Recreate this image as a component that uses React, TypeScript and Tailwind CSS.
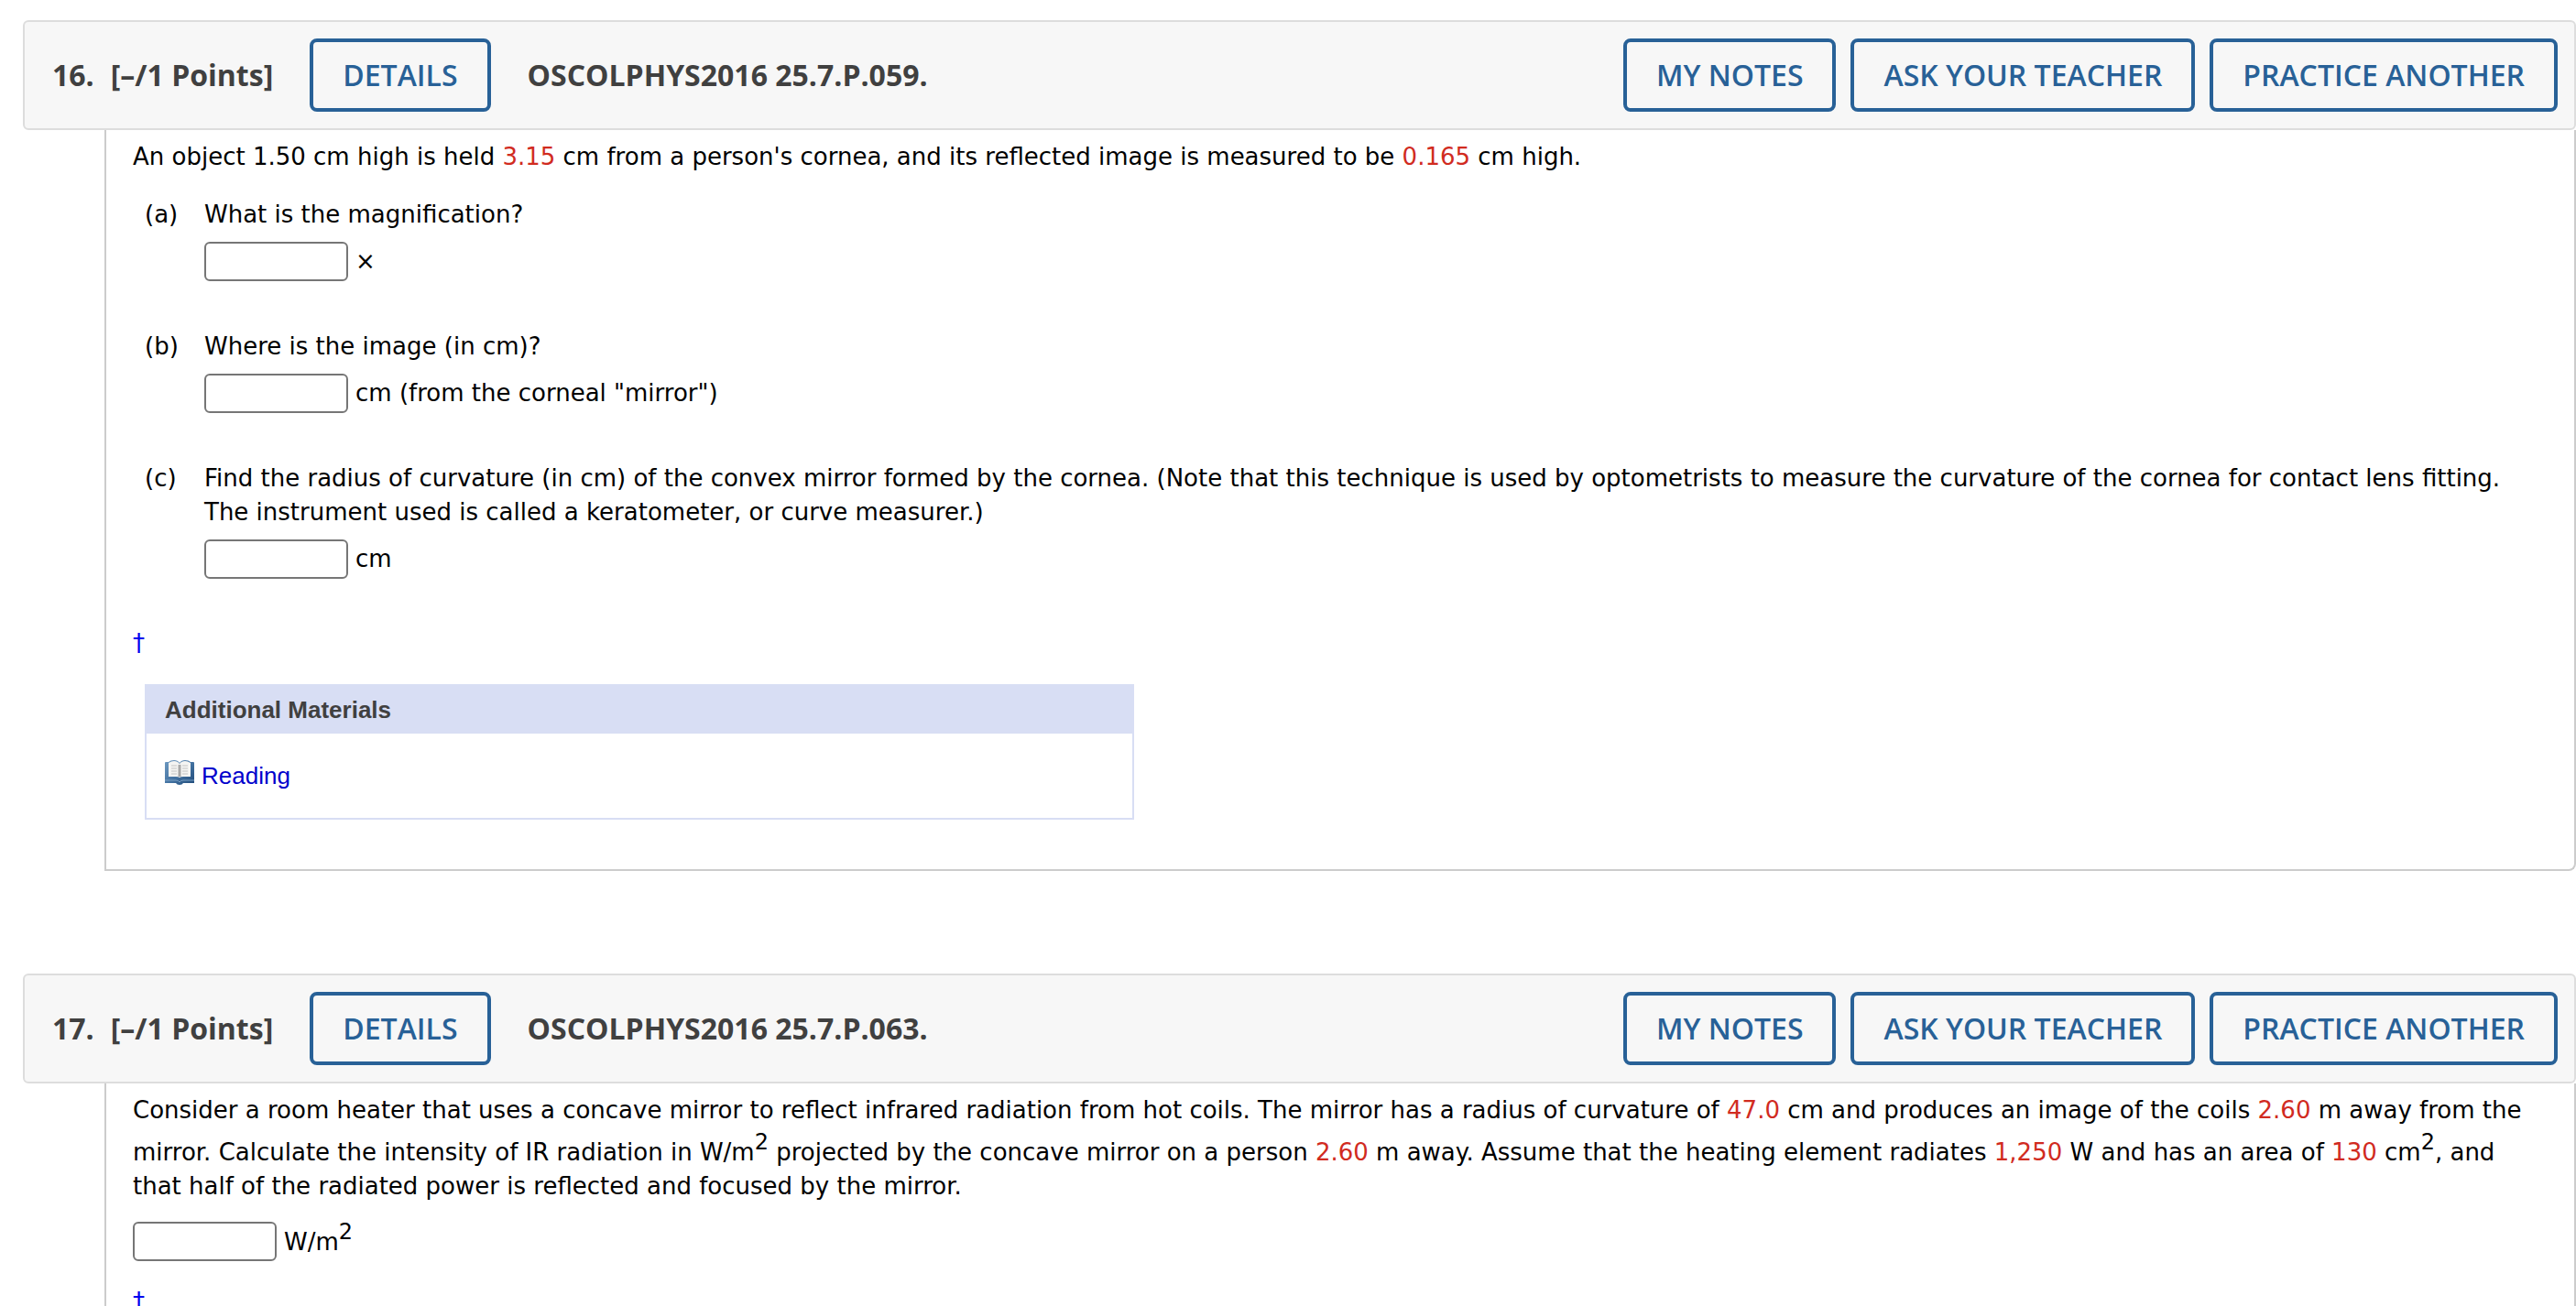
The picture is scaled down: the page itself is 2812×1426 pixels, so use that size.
import type { ReactNode } from "react";
import clsx from "clsx";

interface QuestionProps {
  number: number;
  code: string;
  last?: boolean;
  children: ReactNode;
}

interface AnswerProps {
  id: string;
  label: string;
  children: ReactNode;
}

interface PartProps {
  letter: string;
  question: ReactNode;
  children: ReactNode;
}

const ACTIONS = ["MY NOTES", "ASK YOUR TEACHER", "PRACTICE ANOTHER"];

function HeaderButton({ children }: { children: ReactNode }) {
  return (
    <button
      type="button"
      className="h-20 shrink-0 rounded-lg border-4 border-[#286197] px-8 text-[32px] leading-10 font-semibold whitespace-nowrap text-[#286197]"
    >
      {children}
    </button>
  );
}

// randomized values are shown in red
function Value({ children }: { children: ReactNode }) {
  return <span className="text-[#d12b1f]">{children}</span>;
}

function Sup({ children }: { children: ReactNode }) {
  return <sup className="static align-[12px] text-[24px] leading-8">{children}</sup>;
}

function Answer({ id, label, children }: AnswerProps) {
  return (
    <div className="flex h-[43px] items-center gap-2">
      <input id={id} type="text" aria-label={label} className="h-[43px] w-[157px] rounded-md border-2 border-[#767676] bg-white px-2" />
      <label htmlFor={id} className="[&_sup]:leading-4">
        {children}
      </label>
    </div>
  );
}

function Part({ letter, question, children }: PartProps) {
  return (
    <li className="flex">
      <span className="w-[65px] shrink-0">({letter})</span>
      <div className="flex min-w-0 flex-1 flex-col gap-[11px]">
        <p>{question}</p>
        {children}
      </div>
    </li>
  );
}

function Dagger() {
  return (
    <a href="#footnote" className="text-[#0000ee]">
      †
    </a>
  );
}

function BookIcon() {
  return (
    <svg viewBox="0 0 32 28" className="h-7 w-8" aria-hidden="true">
      <defs>
        <linearGradient id="cover" x1="0" y1="0" x2="1" y2="1">
          <stop offset="0" stopColor="#6f9ac1" />
          <stop offset="0.5" stopColor="#4574a3" />
          <stop offset="1" stopColor="#1f4b79" />
        </linearGradient>
      </defs>
      <path d="M0 4q0-1 1-1h3q2-2 6-2t6 3q2-3 6-3t6 2h3q1 0 1 1v22H20q-1 2-4 2t-4-2H0z" fill="url(#cover)" />
      <path d="M4 4q3-2 6-2 4 0 6 3 2-3 6-3 3 0 6 2v15h-8q-3 0-4 1-1-1-4-1H4z" fill="#f4f4f2" />
      <path d="M16 6v13" stroke="#a8a8a8" strokeWidth="3" />
      <path d="M7 7h6M7 10h6M7 13h6M7 16h6M19 7h6M19 10h6M19 13h6M19 16h6" stroke="#c4c4c4" strokeWidth="1" />
      <path d="M0 23h12q3 0 4 2 1-2 4-2h12" stroke="#7ba0c4" strokeWidth="1" fill="none" />
    </svg>
  );
}

function Question({ number, code, last, children }: QuestionProps) {
  return (
    <section className={clsx("flex flex-col", last && "flex-1")}>
      <header className="flex h-[120px] shrink-0 items-center rounded-md border-2 border-[#dddddd] bg-[#f7f7f7] pr-[18px] pl-[30px] font-['Open_Sans',sans-serif] text-[32px] leading-10 font-bold text-[#404040]">
        <h2 className="flex gap-[18px] whitespace-nowrap">
          <span>{number}.</span>
          <span>[–/1 Points]</span>
        </h2>
        <div className="mr-10 ml-10 flex">
          <HeaderButton>DETAILS</HeaderButton>
        </div>
        <span className="whitespace-nowrap">{code}</span>
        <div className="ml-auto flex gap-4">
          {ACTIONS.map((action) => (
            <HeaderButton key={action}>{action}</HeaderButton>
          ))}
        </div>
      </header>
      <div
        className={clsx(
          "ml-[89px] border-x-2 border-[#cccccc] pt-[11px] pr-9 pl-[29px]",
          last ? "flex-1" : "rounded-br-lg border-b-2 pb-[54px]"
        )}
      >
        {children}
      </div>
    </section>
  );
}

export default function App() {
  return (
    <main className="flex h-screen flex-col gap-28 overflow-hidden bg-white pt-[22px] pl-[25px] font-[Verdana,'DejaVu_Sans',sans-serif] text-[26px] leading-[37px] text-black">
      <Question number={16} code="OSCOLPHYS2016 25.7.P.059.">
        <p>
          An object 1.50 cm high is held <Value>3.15</Value> cm from a person's cornea, and its reflected image is
          measured to be <Value>0.165</Value> cm high.
        </p>
        <ol className="mt-[26px] ml-[13px] flex flex-col gap-[53px]">
          <Part letter="a" question="What is the magnification?">
            <Answer id="q16a" label="Magnification">
              ×
            </Answer>
          </Part>
          <Part letter="b" question="Where is the image (in cm)?">
            <Answer id="q16b" label="Image distance">
              cm (from the corneal "mirror")
            </Answer>
          </Part>
          <Part
            letter="c"
            question="Find the radius of curvature (in cm) of the convex mirror formed by the cornea. (Note that this technique is used by optometrists to measure the curvature of the cornea for contact lens fitting. The instrument used is called a keratometer, or curve measurer.)"
          >
            <Answer id="q16c" label="Radius of curvature">
              cm
            </Answer>
          </Part>
        </ol>
        <p className="mt-[52px]">
          <Dagger />
        </p>
        <div className="mt-[26px] ml-[13px] w-[1080px] max-w-full border-2 border-[#d8def4] font-['Liberation_Sans',Arial,sans-serif]">
          <h3 className="bg-[#d8def4] px-5 pt-2 pb-[7px] font-bold text-[#404040]">Additional Materials</h3>
          <div className="px-5 pt-7 pb-[27px]">
            <a href="#reading" className="flex items-start gap-2 text-[#0000cc]">
              <BookIcon />
              Reading
            </a>
          </div>
        </div>
      </Question>

      <Question number={17} code="OSCOLPHYS2016 25.7.P.063." last>
        <p>
          Consider a room heater that uses a concave mirror to reflect infrared radiation from hot coils. The mirror has
          a radius of curvature of <Value>47.0</Value> cm and produces an image of the coils <Value>2.60</Value> m away
          from the mirror. Calculate the intensity of IR radiation in W/m<Sup>2</Sup> projected by the concave mirror on
          a person <Value>2.60</Value> m away. Assume that the heating element radiates <Value>1,250</Value> W and has
          an area of <Value>130</Value> cm<Sup>2</Sup>, and that half of the radiated power is reflected and focused by
          the mirror.
        </p>
        <div className="mt-5">
          <Answer id="q17" label="Intensity">
            W/m<Sup>2</Sup>
          </Answer>
        </div>
        <p className="mt-[26px]">
          <Dagger />
        </p>
      </Question>
    </main>
  );
}
